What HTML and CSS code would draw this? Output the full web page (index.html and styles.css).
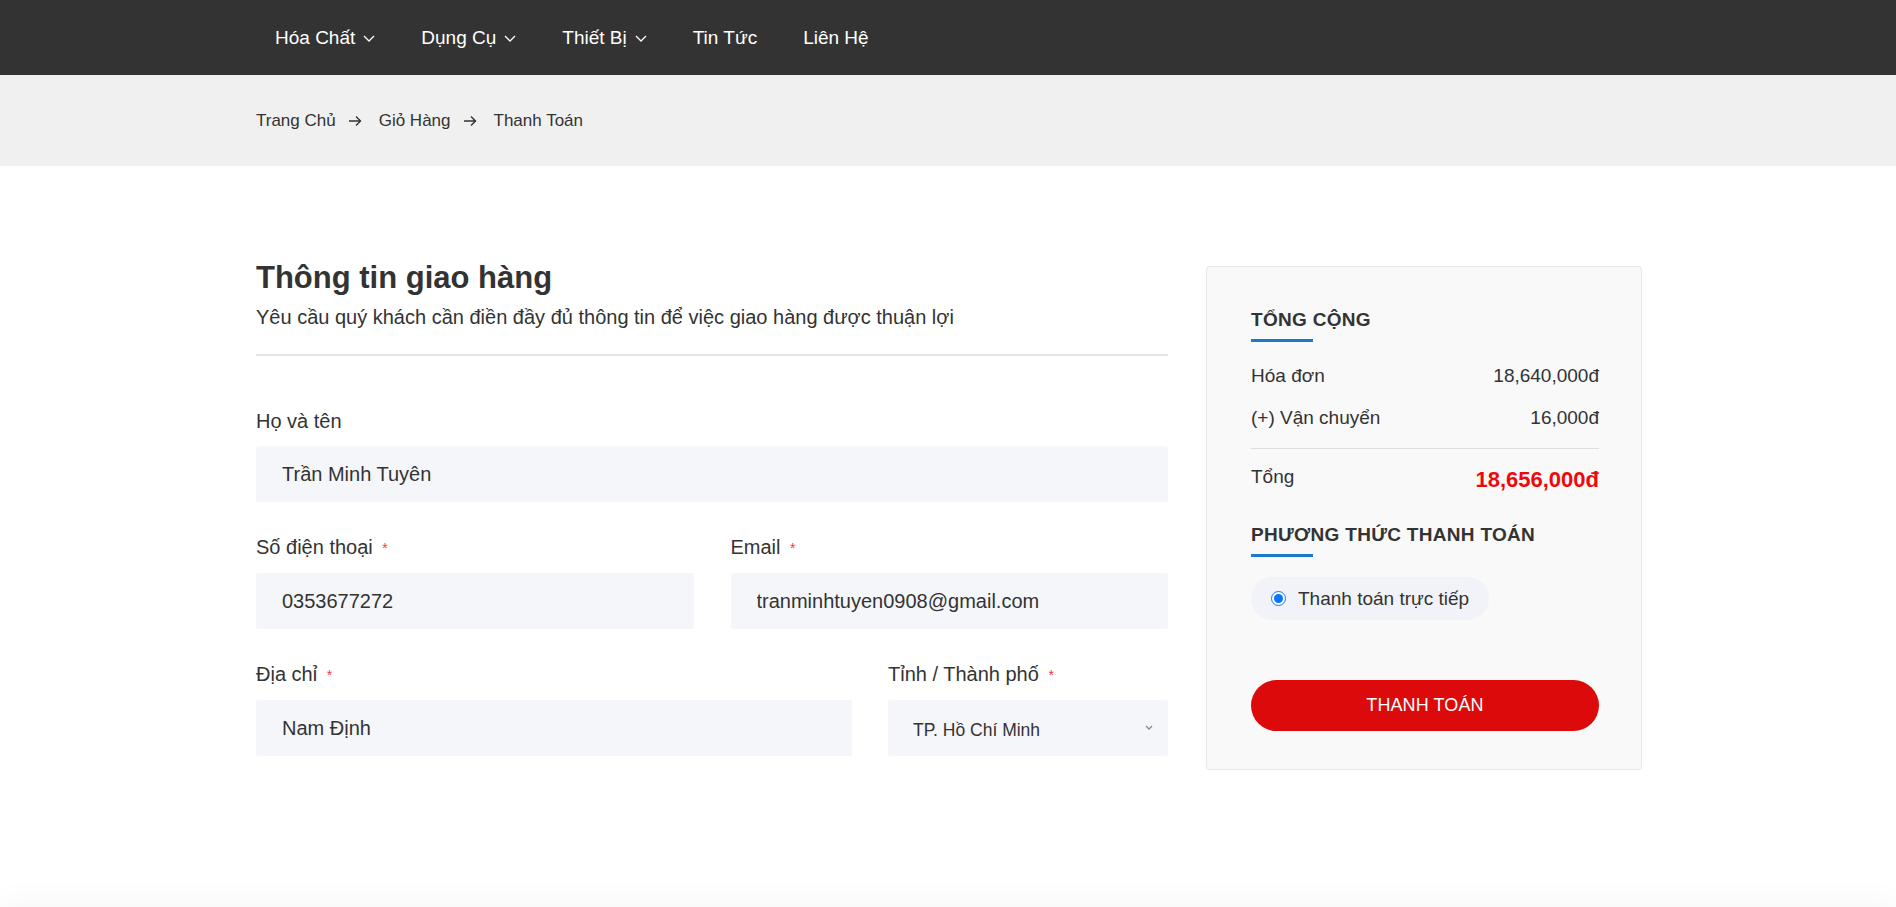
FILE: index.html
```html
<!DOCTYPE html>
<html lang="vi">
<head>
<meta charset="utf-8">
<title>Thanh Toán</title>
<link rel="stylesheet" href="styles.css">
</head>
<body>
<header class="topnav">
  <div class="container">
    <ul class="menu">
      <li class="menu-item">Hóa Chất <svg class="caret" viewBox="0 0 12 7"><polyline points="1,1 6,6 11,1"/></svg></li>
      <li class="menu-item">Dụng Cụ <svg class="caret" viewBox="0 0 12 7"><polyline points="1,1 6,6 11,1"/></svg></li>
      <li class="menu-item">Thiết Bị <svg class="caret" viewBox="0 0 12 7"><polyline points="1,1 6,6 11,1"/></svg></li>
      <li class="menu-item">Tin Tức</li>
      <li class="menu-item">Liên Hệ</li>
    </ul>
  </div>
</header>

<nav class="crumbs">
  <div class="container crumbs-inner">
    <span class="crumb">Trang Chủ</span>
    <svg class="crumb-arrow" viewBox="0 0 14 12"><path d="M1 6h12M8 1.5l4.5 4.5L8 10.5"/></svg>
    <span class="crumb">Giỏ Hàng</span>
    <svg class="crumb-arrow" viewBox="0 0 14 12"><path d="M1 6h12M8 1.5l4.5 4.5L8 10.5"/></svg>
    <span class="crumb">Thanh Toán</span>
  </div>
</nav>

<main class="page">
  <div class="container checkout">
    <section class="shipping">
      <h1 class="title">Thông tin giao hàng</h1>
      <p class="subtitle">Yêu cầu quý khách cần điền đầy đủ thông tin để việc giao hàng được thuận lợi</p>

      <form class="form">
        <div class="group">
          <label class="label">Họ và tên</label>
          <input class="field" type="text" value="Trần Minh Tuyên">
        </div>
        <div class="row row-half">
          <div class="group">
            <label class="label">Số điện thoại <span class="req">*</span></label>
            <input class="field" type="text" value="0353677272">
          </div>
          <div class="group">
            <label class="label">Email <span class="req">*</span></label>
            <input class="field" type="text" value="tranminhtuyen0908@gmail.com">
          </div>
        </div>
        <div class="row row-wide">
          <div class="group">
            <label class="label">Địa chỉ <span class="req">*</span></label>
            <input class="field" type="text" value="Nam Định">
          </div>
          <div class="group">
            <label class="label">Tỉnh / Thành phố <span class="req">*</span></label>
            <div class="select-wrap">
              <select class="field select">
                <option>TP. Hồ Chí Minh</option>
              </select>
              <svg class="select-caret" viewBox="0 0 8 5"><polyline points="1,1 4,4 7,1"/></svg>
            </div>
          </div>
        </div>
      </form>
    </section>

    <aside class="summary">
      <h2 class="box-title">TỔNG CỘNG</h2>
      <div class="line">
        <span>Hóa đơn</span><span>18,640,000đ</span>
      </div>
      <div class="line line-second">
        <span>(+) Vận chuyển</span><span>16,000đ</span>
      </div>
      <div class="line line-total">
        <span>Tổng</span><span class="total">18,656,000đ</span>
      </div>
      <h2 class="box-title pay-title">PHƯƠNG THỨC THANH TOÁN</h2>
      <label class="pay-option">
        <input class="radio" type="radio" name="pay" checked>
        <span>Thanh toán trực tiếp</span>
      </label>
      <button class="pay-btn" type="button">THANH TOÁN</button>
    </aside>
  </div>
</main>
<footer class="foot"></footer>
</body>
</html>
```

FILE: styles.css
```css
* {
  box-sizing: border-box;
}

html, body {
  margin: 0;
  padding: 0;
}

body {
  font-family: "Liberation Sans", Arial, sans-serif;
  color: #333;
  background: #fff;
  overflow-x: hidden;
}

.container {
  width: 1386px;
  margin-left: calc(50% - 692px);
}

/* top navigation */
.topnav {
  background: #333333;
  height: 75px;
}

.menu {
  list-style: none;
  margin: 0;
  padding: 0 0 0 19px;
  height: 75px;
  display: flex;
  align-items: center;
  gap: 46px;
}

.menu-item {
  color: #fff;
  font-size: 19px;
  display: flex;
  align-items: center;
  gap: 8px;
  white-space: nowrap;
}

.caret {
  width: 12px;
  height: 7px;
  fill: none;
  stroke: #fff;
  stroke-width: 1.3;
  margin-top: 2px;
}

/* breadcrumb */
.crumbs {
  background: #f0f0f0;
  height: 91px;
}

.crumbs-inner {
  height: 91px;
  display: flex;
  align-items: center;
  font-size: 17px;
  color: #333;
}

.crumb-arrow {
  width: 14px;
  height: 12px;
  fill: none;
  stroke: #333;
  stroke-width: 1.4;
  margin: 0 17px 0 12px;
}

/* main */
.page {
  min-height: 741px;
}

.checkout {
  padding-top: 93px;
  display: flex;
  align-items: flex-start;
  gap: 38px;
}

.shipping {
  width: 912px;
  flex: none;
}

.title {
  margin: 0;
  font-size: 31px;
  line-height: 37px;
  font-weight: bold;
  color: #333;
}

.subtitle {
  margin: 6px 0 0;
  font-size: 20px;
  line-height: 30px;
  padding-bottom: 22px;
  border-bottom: 2px solid #e4e4e4;
}

.form {
  margin-top: 50px;
}

.row {
  display: grid;
}

.row-half {
  grid-template-columns: 1fr 1fr;
  column-gap: 37px;
}

.row-wide {
  grid-template-columns: 596px 280px;
  column-gap: 36px;
}

.group {
  margin-bottom: 30px;
}

.label {
  display: block;
  font-size: 20px;
  line-height: 30px;
  margin-bottom: 10px;
  color: #333;
}

.req {
  color: #ee3a3a;
  font-size: 14px;
  margin-left: 4px;
  vertical-align: 1px;
}

.field {
  display: block;
  width: 100%;
  height: 56px;
  border: none;
  outline: none;
  border-radius: 3px;
  background: #f5f6fa;
  padding: 0 26px;
  font-family: "Liberation Sans", Arial, sans-serif;
  font-size: 20px;
  color: #333;
}

.select-wrap {
  position: relative;
}

.select {
  appearance: none;
  -webkit-appearance: none;
  font-size: 17.5px;
  padding: 4px 25px 0;
}

.select-caret {
  position: absolute;
  right: 15px;
  top: 25px;
  width: 8px;
  height: 5px;
  fill: none;
  stroke: #888;
  stroke-width: 1.3;
  pointer-events: none;
}

/* summary card */
.summary {
  width: 436px;
  flex: none;
  margin-top: 7px;
  background: #f9f9f9;
  border: 1px solid #e7e7e7;
  border-radius: 4px;
  padding: 41px 42px 38px 44px;
}

.box-title {
  margin: 0;
  font-size: 19px;
  line-height: 23px;
  font-weight: bold;
  letter-spacing: 0.3px;
  color: #333;
}

.box-title::after {
  content: "";
  display: block;
  width: 62px;
  height: 3px;
  background: #1b79cb;
  margin-top: 8px;
}

.line {
  display: flex;
  justify-content: space-between;
  align-items: center;
  font-size: 19px;
  line-height: 28px;
  margin-top: 20px;
}

.line-second {
  margin-top: 14px;
  padding-bottom: 16px;
  border-bottom: 1px solid #dedede;
}

.line-total {
  margin-top: 13px;
  line-height: 30px;
}

.total {
  color: #ee0a0a;
  font-weight: bold;
  font-size: 22px;
  position: relative;
  top: 3px;
}

.pay-title {
  margin-top: 31px;
}

.pay-option {
  display: inline-flex;
  align-items: center;
  gap: 12px;
  height: 43px;
  margin-top: 20px;
  padding: 0 20px;
  border-radius: 22px;
  background: #f1f3f8;
  font-size: 19px;
  color: #333;
}

.radio {
  margin: 0;
  width: 15px;
  height: 15px;
  accent-color: #0a75ff;
}

.pay-btn {
  display: block;
  width: 100%;
  height: 51px;
  margin-top: 60px;
  border: none;
  border-radius: 26px;
  background: #dc0a0a;
  color: #fff;
  font-family: "Liberation Sans", Arial, sans-serif;
  font-size: 18px;
  letter-spacing: 0.1px;
}

.foot {
  height: 60px;
  background: #fff;
  box-shadow: 0 -6px 30px rgba(0, 0, 0, 0.035);
}
```
